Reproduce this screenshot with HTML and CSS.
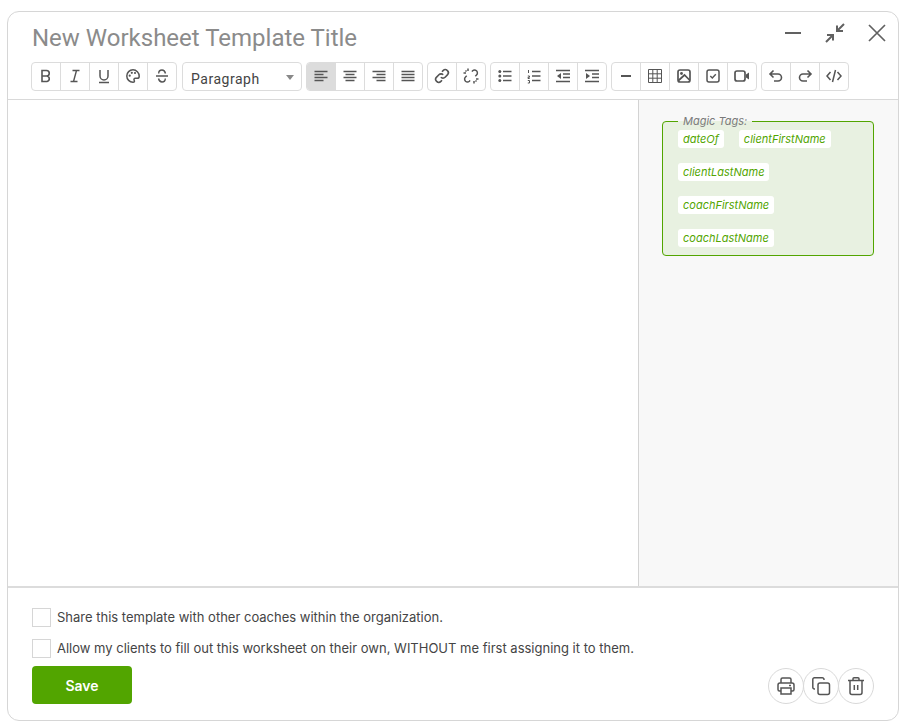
FILE: index.html
```html
<!DOCTYPE html>
<html lang="en">
<head>
<meta charset="UTF-8">
<meta name="viewport" content="width=device-width, initial-scale=1.0">
<title>New Worksheet Template</title>
<link rel="stylesheet" href="styles.css">
</head>
<body>
<div class="modal">
    <div class="head">
        <div class="title-row">
            <h1 class="title">New Worksheet Template Title</h1>
            <div class="win-btns">
                <svg class="win" width="20" height="20" viewBox="0 0 20 20"><path d="M2 10h16" stroke-width="2"/></svg>
                <svg class="win" width="20" height="20" viewBox="0 0 20 20"><path d="M19 1l-7 7M12 2.500V8h6M1 19l7-7M2 12h6v5.500" stroke-width="2"/></svg>
                <svg class="win" width="20" height="20" viewBox="0 0 20 20"><path d="M2 2l16 16M18 2L2 18" stroke-width="1.700"/></svg>
            </div>
        </div>
        <div class="toolbar">
            <div class="group">
                <button class="tb"><svg width="16" height="16" viewBox="0 0 16 16"><path d="M4 2.500h4.500a2.700 2.700 0 0 1 0 5.500H4zM4 8h5a2.800 2.800 0 0 1 0 5.500H4z" stroke-width="1.600"/></svg></button>
                <button class="tb"><svg width="16" height="16" viewBox="0 0 16 16"><path d="M5.500 2.500h7M3.500 13.500h7M9.500 2.500l-3 11" stroke-width="1.400"/></svg></button>
                <button class="tb"><svg width="16" height="16" viewBox="0 0 16 16"><path d="M4 2v6a4 4 0 0 0 8 0V2M3 14.500h10" stroke-width="1.500"/></svg></button>
                <button class="tb"><svg width="16" height="16" viewBox="0 0 16 16"><path d="M8 1.800a6.200 6.200 0 1 0 0 12.400c1.500 0 1.700-1 1.200-1.800-.6-1 0-2.100 1.200-2.100h1.800c1.200 0 2-.9 2-2.100 0-3.500-2.800-6.400-6.200-6.400z" stroke-width="1.500"/><circle class="dot" cx="4.700" cy="7.700" r="1.100"/><circle class="dot" cx="6.800" cy="4.800" r="1.100"/><circle class="dot" cx="10" cy="5" r="1.100"/></svg></button>
                <button class="tb"><svg width="16" height="16" viewBox="0 0 16 16"><path d="M2 8h12M11.500 5.500C11 3.300 9.700 2 8 2 6 2 4.700 3.300 4.700 5.500M4.500 10.500c.5 2.200 1.800 3.500 3.500 3.500 2 0 3.300-1.300 3.300-3.500" stroke-width="1.400"/></svg></button>
            </div>
            <div class="select">Paragraph<span class="caret"></span></div>
            <div class="group">
                <button class="tb active"><svg width="16" height="16" viewBox="0 0 16 16"><path d="M1.500 3.500h13M1.500 6.500h9M1.500 9.500h13M1.500 12.500h9" stroke-width="1.700"/></svg></button>
                <button class="tb"><svg width="16" height="16" viewBox="0 0 16 16"><path d="M1.500 3.500h13M3.500 6.500h9M1.500 9.500h13M3.500 12.500h9" stroke-width="1.700"/></svg></button>
                <button class="tb"><svg width="16" height="16" viewBox="0 0 16 16"><path d="M1.500 3.500h13M5.500 6.500h9M1.500 9.500h13M5.500 12.500h9" stroke-width="1.700"/></svg></button>
                <button class="tb"><svg width="16" height="16" viewBox="0 0 16 16"><path d="M1.500 3.500h13M1.500 6.500h13M1.500 9.500h13M1.500 12.500h13" stroke-width="1.700"/></svg></button>
            </div>
            <div class="group">
                <button class="tb"><svg width="16" height="16" viewBox="0 0 16 16"><path d="M6.800 9.200a3 3 0 0 0 4.300 0l2.300-2.300a3 3 0 0 0-4.300-4.300L8 3.700M9.200 6.800a3 3 0 0 0-4.300 0L2.600 9.100a3 3 0 0 0 4.300 4.300L8 12.300" stroke-width="1.600"/></svg></button>
                <button class="tb"><svg width="16" height="16" viewBox="0 0 16 16"><path d="M9 3.700l.6-.9a2.900 2.900 0 0 1 3.900 0 2.900 2.900 0 0 1 0 4.200l-1.200 1.200M7 12.300l-.6.9a2.900 2.900 0 0 1-3.900 0 2.900 2.900 0 0 1 0-4.200l1.200-1.200M5 .5v2.500M.5 5H3M11 13v2.500M13 11h2.500M2.500 2.500l1 1M12.500 12.500l1 1" stroke-width="1.500"/></svg></button>
            </div>
            <div class="group">
                <button class="tb"><svg width="16" height="16" viewBox="0 0 16 16"><circle class="dot" cx="2.800" cy="3.500" r="1.500"/><circle class="dot" cx="2.800" cy="8" r="1.500"/><circle class="dot" cx="2.800" cy="12.500" r="1.500"/><path d="M6 3.500h8.500M6 8h8.500M6 12.500h8.500" stroke-width="1.600"/></svg></button>
                <button class="tb"><svg width="16" height="16" viewBox="0 0 16 16"><path d="M2.500 2v3M1.800 8h1.700v1.300H2v1.200h1.700M1.800 12.500h1.700v2.500H1.800" stroke-width="1"/><path d="M6 3.500h8.500M6 8h8.500M6 12.500h8.500" stroke-width="1.400"/></svg></button>
                <button class="tb"><svg width="16" height="16" viewBox="0 0 16 16"><path d="M1 2.500h14M8 6h7M8 9.500h7M1 13.500h14" stroke-width="1.500"/><path class="solid" d="M6 5v6L2 8z"/></svg></button>
                <button class="tb"><svg width="16" height="16" viewBox="0 0 16 16"><path d="M1 2.500h14M8 6h7M8 9.500h7M1 13.500h14" stroke-width="1.500"/><path class="solid" d="M2 5v6l4-3z"/></svg></button>
            </div>
            <div class="group">
                <button class="tb"><svg width="16" height="16" viewBox="0 0 16 16"><path d="M3 8h10" stroke-width="1.800"/></svg></button>
                <button class="tb"><svg width="16" height="16" viewBox="0 0 16 16"><path d="M1.500 1.500h13v13h-13zM1.500 5.800h13M1.500 10.200h13M5.800 1.500v13M10.200 1.500v13" stroke-width="1"/></svg></button>
                <button class="tb"><svg width="16" height="16" viewBox="0 0 16 16"><rect x="2" y="2" width="12" height="12" rx="2" stroke-width="1.700"/><circle class="dot" cx="5.500" cy="5.500" r="1.400"/><path d="M2.500 12.500l6-5.500 5 5" stroke-width="1.700"/></svg></button>
                <button class="tb"><svg width="16" height="16" viewBox="0 0 16 16"><rect x="2" y="2" width="12" height="12" rx="2" stroke-width="1.500"/><path d="M5.300 8l2 2 3.500-3.800" stroke-width="1.400"/></svg></button>
                <button class="tb"><svg width="16" height="16" viewBox="0 0 16 16"><rect x="1" y="3" width="10" height="10" rx="2" stroke-width="1.700"/><path class="solid" d="M12 6.500l3-2v7l-3-2z"/></svg></button>
            </div>
            <div class="group">
                <button class="tb"><svg width="16" height="16" viewBox="0 0 16 16"><path d="M5.500 2.500L2 6l3.500 3.500M2 6h8a3.500 3.500 0 0 1 0 7H6" stroke-width="1.600"/></svg></button>
                <button class="tb"><svg width="16" height="16" viewBox="0 0 16 16"><path d="M10.500 2.500L14 6l-3.500 3.500M14 6H6a3.500 3.500 0 0 0 0 7h4" stroke-width="1.600"/></svg></button>
                <button class="tb"><svg width="16" height="16" viewBox="0 0 16 16"><path d="M4.500 4L1 8l3.500 4M11.500 4L15 8l-3.500 4M9.500 2l-3 12" stroke-width="1.500"/></svg></button>
            </div>
        </div>
    </div>

    <div class="main">
        <div class="editor"></div>
        <div class="side">
            <fieldset class="tags">
                <legend>Magic Tags:</legend>
                <span class="tag">dateOf</span>
                <span class="tag">clientFirstName</span>
                <span class="tag">clientLastName</span>
                <span class="tag">coachFirstName</span>
                <span class="tag">coachLastName</span>
            </fieldset>
        </div>
    </div>

    <div class="foot">
        <label class="check"><span class="box"></span>Share this template with other coaches within the organization.</label>
        <label class="check"><span class="box"></span>Allow my clients to fill out this worksheet on their own, WITHOUT me first assigning it to them.</label>
        <div class="actions">
            <button class="save">Save</button>
            <div class="round-btns">
                <button class="round"><svg width="20" height="20" viewBox="0 0 20 20"><path d="M5 7V3.500A1.500 1.500 0 0 1 6.500 2h7A1.500 1.500 0 0 1 15 3.500V7M5 15H3.500A1.500 1.500 0 0 1 2 13.500V9a2 2 0 0 1 2-2h12a2 2 0 0 1 2 2v4.500a1.500 1.500 0 0 1-1.500 1.500H15M5 12h10v6H5zM13 9.500h2" stroke-width="1.500"/></svg></button>
                <button class="round"><svg width="20" height="20" viewBox="0 0 20 20"><rect x="7" y="7" width="11.500" height="11.500" rx="2" stroke-width="1.500"/><path d="M4 13H3.500A1.700 1.700 0 0 1 1.800 11.300V3.500A1.700 1.700 0 0 1 3.500 1.800h7.800A1.700 1.700 0 0 1 13 3.500V4" stroke-width="1.500"/></svg></button>
                <button class="round"><svg width="20" height="20" viewBox="0 0 20 20"><path d="M2 4.500h16M7 4.500V2.800A1 1 0 0 1 8 1.800h4a1 1 0 0 1 1 1v1.700M4 4.500v12a2 2 0 0 0 2 2h8a2 2 0 0 0 2-2v-12M8.300 9v5M11.700 9v5" stroke-width="1.500"/></svg></button>
            </div>
        </div>
    </div>
</div>
</body>
</html>
```
FILE: styles.css
```css
* {
    box-sizing: border-box;
}
body {
    margin: 0;
    background-color: #fff;
    font-family: Inter, "Liberation Sans", sans-serif;
}
svg {
    display: block;
    fill: none;
    stroke: #555;
}
svg .dot,
svg .solid {
    fill: #555;
    stroke: none;
}
.modal {
    width: 892px;
    height: 710px;
    margin: 11px 0 0 7px;
    background-color: #fff;
    border: 1px solid #d6d6d6;
    border-radius: 12px;
    display: flex;
    flex-direction: column;
    overflow: hidden;
}
.head {
    height: 88px;
    padding: 0 11px 0 23px;
    border-bottom: 1px solid #d9d9d9;
}
.title-row {
    display: flex;
    justify-content: space-between;
    height: 50px;
    padding-left: 1px;
}
.title {
    margin: 10px 0 0;
    font-family: Roboto, sans-serif;
    font-size: 24px;
    line-height: 32px;
    font-weight: 400;
    color: #8b8b8b;
}
.win-btns {
    display: flex;
    gap: 22px;
    padding-top: 11px;
}
.win {
    stroke: #616161;
}
.toolbar {
    display: flex;
    gap: 4px;
}
.group {
    display: flex;
    height: 29px;
    background-color: #fff;
    border: 1px solid #dcdcdc;
    border-radius: 4px;
    overflow: hidden;
}
.tb {
    width: 29px;
    padding: 0 0 2px;
    border: 0;
    border-left: 1px solid #dcdcdc;
    background: none;
    display: flex;
    align-items: center;
    justify-content: center;
}
.tb:first-child {
    width: 28px;
    border-left: 0;
}
.tb.active {
    background-color: #dcdcdc;
}
.select {
    width: 120px;
    height: 29px;
    margin-left: 1px;
    padding: 0 8px;
    border: 1px solid #dcdcdc;
    border-radius: 4px;
    font-family: Roboto, sans-serif;
    font-size: 14px;
    letter-spacing: .53px;
    line-height: 33px;
    color: #444;
    position: relative;
}
.caret {
    position: absolute;
    right: 7px;
    top: 12px;
    border-left: 4.500px solid transparent;
    border-right: 4.500px solid transparent;
    border-top: 5px solid #888;
}
.main {
    flex: 1;
    display: flex;
    border-bottom: 2px solid #dcdcdc;
}
.editor {
    flex: 1;
}
.side {
    width: 260px;
    padding: 15px 24px 0 23px;
    background-color: #f8f8f8;
    border-left: 1px solid #d3d3d3;
}
.tags {
    margin: 0;
    min-width: 0;
    height: 141px;
    padding: 2px 15px 0;
    background-color: #e8f1e1;
    border: 1px solid #52a500;
    border-radius: 4px;
    display: flex;
    flex-wrap: wrap;
    align-content: flex-start;
    gap: 15px;
}
.tags legend {
    margin-left: 0;
    padding: 0 5px;
    font-size: 11px;
    line-height: 13px;
    font-style: italic;
    color: #7a7a7a;
}
.tag {
    height: 18px;
    padding: 0 5px;
    background-color: #fff;
    border-radius: 3px;
    font-size: 11px;
    line-height: 18px;
    font-style: italic;
    color: #52a500;
}
.foot {
    height: 132px;
    padding: 20px 24px 0 24px;
}
.check {
    display: flex;
    align-items: flex-start;
    gap: 6px;
    height: 19px;
    margin-bottom: 12px;
    font-size: 13px;
    line-height: 18px;
    color: #444;
}
.box {
    width: 19px;
    height: 19px;
    background-color: #fff;
    border: 1px solid #d6d6d6;
}
.actions {
    display: flex;
    justify-content: space-between;
    margin-top: -4px;
}
.save {
    width: 100px;
    height: 38px;
    padding: 0;
    border: 0;
    border-radius: 4px;
    background-color: #52a500;
    color: #fff;
    font-family: Inter, sans-serif;
    font-size: 14px;
    font-weight: 600;
}
.round-btns {
    display: flex;
    padding-top: 2px;
}
.round {
    width: 36px;
    height: 36px;
    margin-left: -1px;
    padding: 0;
    border: 1px solid #d9d9d9;
    border-radius: 50%;
    background-color: #fff;
    display: flex;
    align-items: center;
    justify-content: center;
}
```
